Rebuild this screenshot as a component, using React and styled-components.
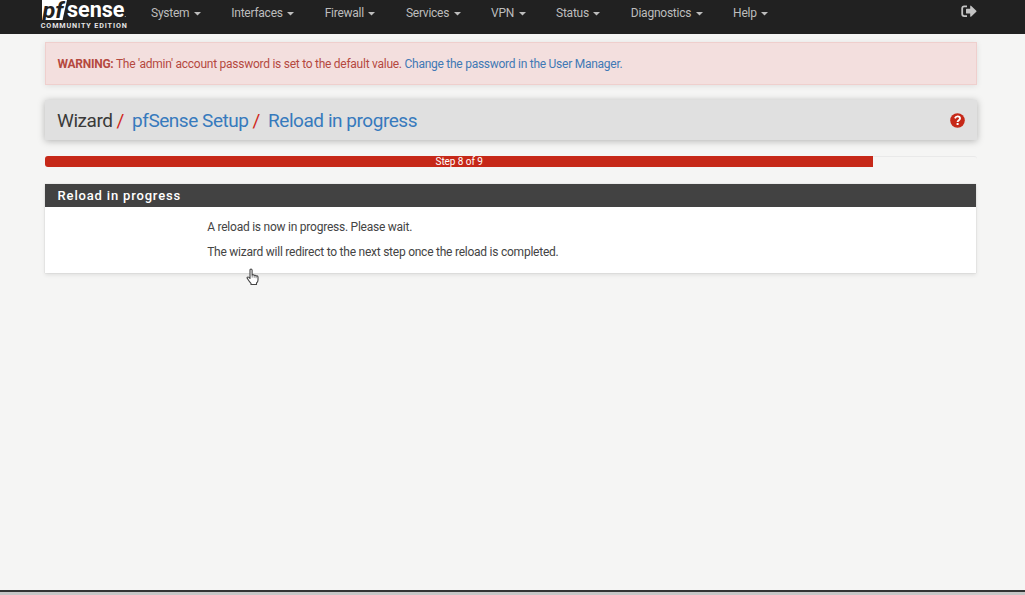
import React from "react";
import styled, { createGlobalStyle } from "styled-components";

const GlobalStyle = createGlobalStyle`
  * { box-sizing: border-box; }
  body {
    margin: 0;
    background: #f5f5f4;
    font-family: Roboto, "Liberation Sans", sans-serif;
    font-size: 12px;
    letter-spacing: -0.24px;
    color: #444;
  }
`;

const Page = styled.div`
  position: relative;
  height: 595px;
  display: flex;
  flex-direction: column;
  overflow: hidden;
`;

const Navbar = styled.header`
  height: 34px;
  flex: none;
  display: flex;
  align-items: flex-start;
  padding: 0 48px 0 40px;
  background: #212121;
`;

const Logo = styled.svg`
  display: block;
  width: 90px;
  height: 32px;
  letter-spacing: 0;
`;

const Menu = styled.nav`
  display: flex;
  flex: 1;
  gap: 30.4px;
  padding-left: 21px;
`;

const MenuItem = styled.a`
  display: flex;
  align-items: center;
  gap: 4.5px;
  height: 26px;
  color: #bdbdbd;
  white-space: nowrap;
`;

const Caret = styled.svg`
  display: block;
  width: 7px;
  height: 4px;
  margin-top: 1px;
`;

const SignOut = styled.svg`
  display: block;
  width: 16px;
  height: 13px;
  margin-top: 5px;
`;

const Content = styled.main`
  flex: 1;
  padding: 8px 48px 0 45px;
`;

const Alert = styled.div`
  height: 43px;
  padding: 0 11.5px;
  line-height: 42px;
  letter-spacing: -0.26px;
  border: 1px solid #efcfcd;
  background: #f3dfde;
  color: #b5493f;
  box-shadow: 0 1px 6px rgba(0, 0, 0, 0.09);
  white-space: nowrap;
`;

const Link = styled.a`
  color: #4179b5;
`;

const Breadcrumb = styled.div`
  display: flex;
  align-items: center;
  justify-content: space-between;
  height: 40px;
  margin-top: 15px;
  padding: 0 12.5px 0 12px;
  background: #e0e0e0;
  box-shadow: 0 1px 7px 0 rgba(0, 0, 0, 0.28);
`;

const Crumbs = styled.div`
  display: flex;
  font-size: 19px;
  letter-spacing: -0.46px;
  line-height: 41px;
  color: #3a3a3a;
  white-space: nowrap;
`;

const Crumb = styled.span`
  color: ${(p) => (p.$link ? "#377abd" : "#3a3a3a")};
`;

const Slash = styled.span`
  color: #d0281c;
  margin: 0 8.2px 0 4px;
`;

const HelpIcon = styled.svg`
  width: 15px;
  height: 15px;
`;

const Progress = styled.div`
  height: 12px;
  margin-top: 16px;
  border-top: 1px solid #e9e9e9;
  border-radius: 3px;
`;

const ProgressBar = styled.div`
  width: ${(p) => p.$value}%;
  height: 11px;
  margin-top: -1px;
  border-radius: 3px 0 0 3px;
  background: #c62818;
  color: #fff;
  font-size: 10px;
  letter-spacing: -0.05px;
  line-height: 12px;
  text-align: center;
`;

const Panel = styled.section`
  margin: 16px 0.6px 0 0.4px;
  height: 88.5px;
  background: #fff;
  box-shadow: 0 0 1px rgba(0, 0, 0, 0.2), 0 2px 4px rgba(0, 0, 0, 0.09);
`;

const PanelTitle = styled.h2`
  margin: 0;
  height: 23px;
  padding-left: 12.2px;
  background: #424242;
  color: #fff;
  font-size: 13px;
  font-weight: 500;
  letter-spacing: 0.83px;
  line-height: 24px;
`;

const PanelBody = styled.div`
  padding: 8px 0 0 161.8px;
`;

const Message = styled.p`
  margin: 0;
  height: 25px;
  line-height: 25px;
  color: #444;
`;

const Footer = styled.footer`
  flex: none;
  height: 5px;
  border-top: 2px solid #333;
  background: #c6c6c6;
`;

const HandPointer = styled.svg`
  position: absolute;
  left: 246px;
  top: 268px;
  width: 13px;
  height: 18px;
`;

const menus = ["System", "Interfaces", "Firewall", "Services", "VPN", "Status", "Diagnostics", "Help"];

export default function App() {
  return (
    <Page>
      <GlobalStyle />
      <Navbar>
        <Logo viewBox="0 0 90 32" fontFamily="Roboto, sans-serif">
          <path d="M2 0H27L22.5 20H2Z" fill="#fff" />
          <text x="2.5" y="17.5" fontSize="22" fontWeight="700" fontStyle="italic" fill="#212121" textLength="21" lengthAdjust="spacingAndGlyphs">pf</text>
          <text x="27" y="17.3" fontSize="21.5" fontWeight="700" fill="#fff" textLength="57.5" lengthAdjust="spacingAndGlyphs">sense</text>
          <circle cx="85.3" cy="16.5" r="0.6" fill="#aaa" />
          <text x="0.8" y="28.3" fontSize="7.2" fontWeight="700" fill="#e4e4e4" textLength="86" lengthAdjust="spacing">COMMUNITY EDITION</text>
        </Logo>
        <Menu>
          {menus.map((name) => (
            <MenuItem key={name}>
              {name}
              <Caret viewBox="0 0 7 4">
                <path d="M0 0H7L3.5 3.6Z" fill="#bdbdbd" />
              </Caret>
            </MenuItem>
          ))}
        </Menu>
        <SignOut viewBox="0 0 16 13">
          <path d="M6 1.3H3.2Q1.2 1.3 1.2 3.3V9.1Q1.2 11.1 3.2 11.1H6" fill="none" stroke="#c4c4c4" strokeWidth="1.8" />
          <path d="M5 4.4Q5 3.8 5.6 3.8H9.2V1.2Q9.4 .2 10.3 .9L15.3 5.7Q15.8 6.2 15.3 6.7L10.3 11.5Q9.4 12.2 9.2 11.2V8.6H5.6Q5 8.6 5 8Z" fill="#c4c4c4" />
        </SignOut>
      </Navbar>
      <Content>
        <Alert>
          <b>WARNING:</b> The 'admin' account password is set to the default value.{" "}
          <Link>Change the password in the User Manager.</Link>
        </Alert>
        <Breadcrumb>
          <Crumbs>
            <Crumb>Wizard</Crumb>
            <Slash>/</Slash>
            <Crumb $link>pfSense Setup</Crumb>
            <Slash>/</Slash>
            <Crumb $link>Reload in progress</Crumb>
          </Crumbs>
          <HelpIcon viewBox="0 0 15 15">
            <circle cx="7.5" cy="7.5" r="7.3" fill="#c62818" />
            <path d="M5 5.4C5.5 3.9 6.4 3.4 7.6 3.4C9 3.4 10 4.2 10 5.4C10 7.2 7.6 7.1 7.6 9" fill="none" stroke="#fff" strokeWidth="1.9" />
            <rect x="6.6" y="10" width="2" height="2" fill="#fff" />
          </HelpIcon>
        </Breadcrumb>
        <Progress>
          <ProgressBar $value={88.89}>Step 8 of 9</ProgressBar>
        </Progress>
        <Panel>
          <PanelTitle>Reload in progress</PanelTitle>
          <PanelBody>
            <Message>A reload is now in progress. Please wait.</Message>
            <Message>The wizard will redirect to the next step once the reload is completed.</Message>
          </PanelBody>
        </Panel>
      </Content>
      <Footer />
      <HandPointer viewBox="0 0 13 18">
        <path d="M4 10.5V2.2Q4 1 5 1T6.1 2.2V7Q7.6 6.2 8.1 7.4Q9.5 6.8 10 8Q12 7.5 12 9.3V12Q12 14 10.5 15V16.5H5V15.3Q3.3 13.8 1.2 10.3Q.8 9 2 9Q3 9 4 10.5Z" fill="#fff" stroke="#444" strokeWidth="1.1" strokeLinejoin="round" />
        <path d="M6.2 7V9.6M8.2 7.6V9.8M10.1 8.2V10.2" stroke="#555" strokeWidth=".7" />
      </HandPointer>
    </Page>
  );
}
